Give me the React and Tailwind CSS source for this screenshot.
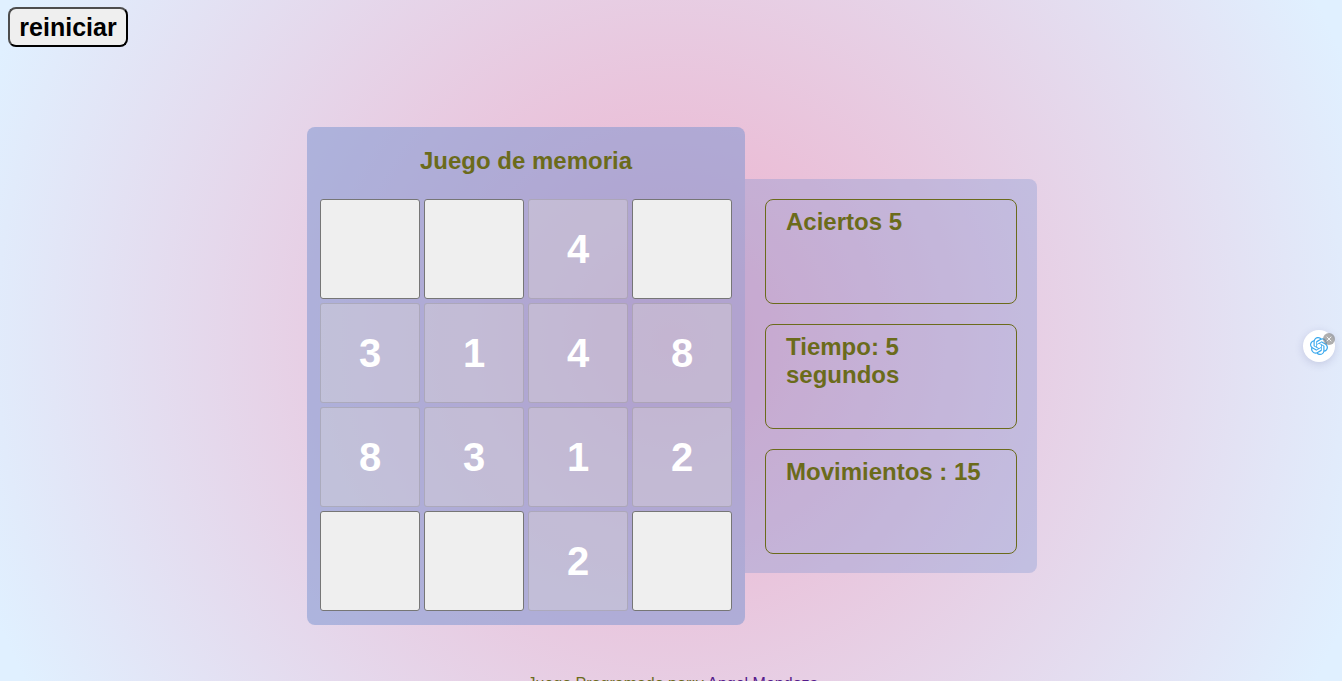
import { SiOpenai } from "react-icons/si";
import { X } from "lucide-react";

const board = [
  [null, null, 4, null],
  [3, 1, 4, 8],
  [8, 3, 1, 2],
  [null, null, 2, null],
];

function Tile({ value }) {
  return (
    <button
      type="button"
      disabled={value !== null}
      aria-label={value === null ? "Carta oculta" : undefined}
      className="size-[100px] rounded-[3px] border border-[#767676] bg-[#efefef] text-[40px] font-bold disabled:border-[#767676]/30 disabled:bg-[#efe8da]/30 disabled:text-white"
    >
      {value}
    </button>
  );
}

function Stat({ children }) {
  return (
    <h2 className="h-[105px] rounded-lg border border-[#6b6b1b] px-5 py-2 text-2xl leading-7 font-bold">
      {children}
    </h2>
  );
}

export default function App() {
  return (
    <div className="h-screen overflow-hidden bg-[radial-gradient(circle,#eeaeca_0%,#e0f0ff_97%)] font-['Liberation_Sans',Arial,sans-serif] text-[#6b6b1b]">
      <header className="p-2 pt-[7px]">
        <button
          type="button"
          className="block h-10 w-[120px] rounded-lg border-2 border-black border-t-[#4d4d4d] border-l-[#4d4d4d] bg-[#efefef] text-[25px] leading-7 font-bold text-black"
        >
          reiniciar
        </button>
      </header>

      <main className="mt-[72px] flex items-center justify-center pl-0.5">
        <section className="rounded-lg bg-[#7692d0]/50 px-[13px] pt-5 pb-3.5">
          <h1 className="mb-6 text-center text-2xl leading-7 font-bold">
            Juego de memoria
          </h1>
          <div className="grid grid-cols-4 gap-1">
            {board.flat().map((value, index) => (
              <Tile key={index} value={value} />
            ))}
          </div>
        </section>
        <section className="flex w-[292px] flex-col gap-5 rounded-r-lg bg-[#7090d0]/30 px-5 pt-5 pb-[19px]">
          <Stat>Aciertos 5</Stat>
          <Stat>Tiempo: 5 segundos</Stat>
          <Stat>Movimientos : 15</Stat>
        </section>
      </main>

      <footer className="mt-[47px] pl-1 text-center text-base">
        Juego Programado por:v{" "}
        <a href="#autor" className="text-[#551a8b]">
          Angel Mendoza
        </a>
      </footer>

      <div className="fixed top-[330px] right-[7px]">
        <button
          type="button"
          aria-label="Abrir asistente"
          className="flex size-8 items-center justify-center rounded-full bg-white shadow-[0_2px_8px_rgba(80,80,140,0.2)]"
        >
          <SiOpenai className="size-[18px] text-[#3aa9ee]" />
        </button>
        <button
          type="button"
          aria-label="Cerrar asistente"
          className="absolute top-[3px] right-0 flex size-3 items-center justify-center rounded-full bg-[#8c8c8c]/70 text-white"
        >
          <X className="size-2" strokeWidth={2.5} />
        </button>
      </div>
    </div>
  );
}
